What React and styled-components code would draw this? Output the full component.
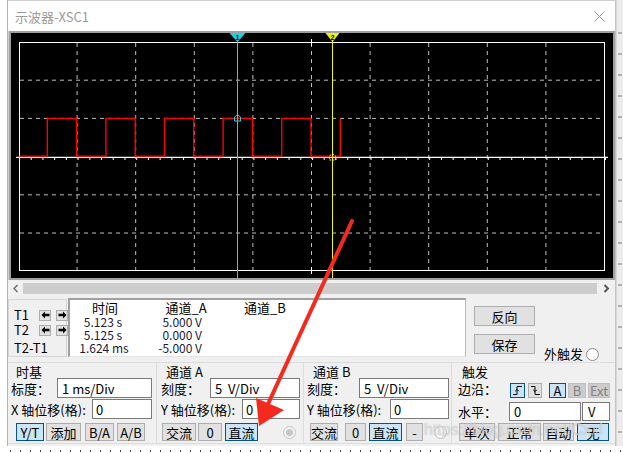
import React from "react";
import styled, { createGlobalStyle } from "styled-components";

const FONT = `"Noto Sans CJK SC", "Noto Sans", sans-serif`;

const GlobalStyle = createGlobalStyle`
  *, *::before, *::after { box-sizing: border-box; }
  html, body { margin: 0; padding: 0; background: #ffffff; }
  body { font-family: ${FONT}; color: #000; }
`;

const Page = styled.div`
  position: relative;
  width: 623px;
  height: 453px;
  overflow: hidden;
  display: flex;
  flex-direction: column;
  background: #fff;
`;

const TopRow = styled.div`
  display: flex;
  height: 446px;
`;

const LeftGap = styled.div`
  width: 7px;
  flex: none;
  background: #fff;
`;

const SideStrip = styled.div`
  flex: 1;
  background-color: #ececec;
  border-left: 1px solid #d8d8d8;
  background-image: repeating-linear-gradient(
    to bottom,
    transparent 0 12px,
    #b0b0b0 12px 14px,
    transparent 14px 21px
  );
  background-size: 4px 100%;
  background-repeat: no-repeat;
  background-position: 1px 20px;
`;

const DotRow = styled.div`
  height: 7px;
  background-color: #fff;
  background-image: repeating-linear-gradient(to right, transparent 0 9px, #444 9px 10px);
  background-size: 100% 2px;
  background-repeat: no-repeat;
  background-position: 1px 4px;
`;

const Window = styled.div`
  width: 609px;
  flex: none;
  display: flex;
  flex-direction: column;
  background: #f0f0f0;
  border-left: 1px solid #b4b4b4;
  border-right: 1px solid #c4c4c4;
`;

const TitleBar = styled.div`
  height: 31px;
  background: #fff;
  border-top: 1px solid #cfcfcf;
  display: flex;
  align-items: center;
  justify-content: space-between;
  padding: 0 10px 0 7px;
  font-size: 13px;
  color: #9a9a9a;
`;

const ScopeFrame = styled.div`
  height: 249px;
  background: #a0a0a0;
  border-left: 1px solid #d0d0d0;
  padding: 2px 2px 2px 2px;
  display: flex;
`;

const Screen = styled.div`
  width: 602px;
  height: 245px;
  background: #000;
  svg { display: block; }
`;

const ScrollBar = styled.div`
  height: 17px;
  display: flex;
  align-items: center;
`;

const ScrollArrow = styled.div`
  width: ${(p) => p.$w}px;
  height: 17px;
  display: flex;
  align-items: center;
  justify-content: center;
`;

const ScrollTrack = styled.div`
  flex: 1;
  height: 11px;
  background: #cdcdcd;
`;

const InfoArea = styled.div`
  height: 61px;
  display: flex;
  align-items: flex-start;
`;

const TPanel = styled.div`
  width: 59px;
  height: 58px;
  margin-top: 2px;
  border: 1px solid #d5d5d5;
  padding: 9px 0 0 5px;
  display: grid;
  grid-template-columns: 20px 12px 12px;
  grid-template-rows: 12px 12px 14px;
  column-gap: 5px;
  row-gap: 3px;
  align-content: start;
  font-size: 13px;
`;

const TLabel = styled.div`
  line-height: 12px;
  font-size: 13px;
  grid-column: ${(p) => p.$span || "auto"};
  margin-top: ${(p) => p.$mt || 0}px;
`;

const MiniBtn = styled.div`
  width: 12px;
  height: 11px;
  align-self: center;
  background: #e1e1e1;
  border: 1px solid #adadad;
  display: flex;
  align-items: center;
  justify-content: center;
`;

const DataTable = styled.div`
  width: 398px;
  height: 59px;
  margin: 1px 0 0 1px;
  background: #fff;
  border-top: 2px solid #a0a0a0;
  border-left: 2px solid #a0a0a0;
  border-right: 1px solid #b8b8b8;
  border-bottom: 1px solid #e4e4e4;
  display: grid;
  grid-template-columns: 70px 82px 86px;
  grid-template-rows: 15px 13px 13px 13px;
  align-content: start;
`;

const HeadCell = styled.div`
  font-size: 13px;
  line-height: 15px;
  text-align: center;
  padding-left: ${(p) => p.$pl || 0}px;
  white-space: nowrap;
`;

const ValCell = styled.div`
  font-size: 12px;
  line-height: 13px;
  color: #1a1a3a;
  white-space: nowrap;
  text-align: ${(p) => p.$align || "center"};
  padding-right: ${(p) => p.$pr || 0}px;
`;

const RightPanel = styled.div`
  flex: 1;
  height: 61px;
  display: flex;
  padding: 9px 0 0 8px;
`;

const BtnColumn = styled.div`
  display: flex;
  flex-direction: column;
  gap: 8px;
`;

const ExtTrig = styled.div`
  align-self: flex-end;
  margin: 0 0 -4px 9px;
  display: flex;
  align-items: center;
  gap: 3px;
  font-size: 13px;
  line-height: 16px;
`;

const Btn = styled.div`
  flex: none;
  width: ${(p) => p.$w}px;
  height: ${(p) => p.$h || 18}px;
  margin-left: ${(p) => p.$ml || 0}px;
  display: flex;
  align-items: center;
  justify-content: center;
  font-size: 13px;
  line-height: 1;
  white-space: pre;
  background: ${(p) => (p.$active ? "#cce4f7" : p.$disabled ? "#cccccc" : "#e1e1e1")};
  border: 1px solid ${(p) => (p.$active ? "#005499" : p.$disabled ? "#bfbfbf" : "#adadad")};
  color: ${(p) => (p.$disabled ? "#838383" : "#000")};
`;

const Radio = styled.div`
  flex: none;
  width: 13px;
  height: 13px;
  border-radius: 50%;
  margin-left: ${(p) => p.$ml || 0}px;
  background: ${(p) => (p.$disabled ? "#f4f4f4" : "#fff")};
  border: 1px solid ${(p) => (p.$disabled ? "#c4c4c4" : "#8c8c8c")};
  display: flex;
  align-items: center;
  justify-content: center;
  &::after {
    content: "";
    width: 7px;
    height: 7px;
    border-radius: 50%;
    background: ${(p) => (p.$dot ? "#c6c6c6" : "transparent")};
  }
`;

const Controls = styled.div`
  display: flex;
  margin-top: 4px;
  height: 82px;
  border-top: 1px solid #dcdcdc;
  border-bottom: 1px solid #dcdcdc;
`;

const Group = styled.div`
  flex: none;
  width: ${(p) => p.$w}px;
  border-right: ${(p) => (p.$last ? "none" : "1px solid #dcdcdc")};
  padding: 0 ${(p) => p.$pr}px 0 ${(p) => p.$pl}px;
  display: flex;
  flex-direction: column;
`;

const GroupTitle = styled.div`
  height: 16px;
  line-height: 16px;
  margin: 1px 0 0 ${(p) => p.$ml}px;
  font-size: 13px;
  white-space: pre;
`;

const Row = styled.div`
  display: flex;
  align-items: center;
  justify-content: space-between;
  height: ${(p) => p.$h}px;
  margin-top: ${(p) => p.$mt}px;
  font-size: 13px;
  white-space: nowrap;
`;

const BtnRow = styled.div`
  display: flex;
  align-items: center;
  height: 18px;
  margin-top: ${(p) => p.$mt ?? 4}px;
  padding-left: ${(p) => p.$pl}px;
`;

const BtnGroup = styled.div`
  display: flex;
  align-self: flex-end;
`;

const Field = styled.div`
  flex: none;
  width: ${(p) => p.$w}px;
  height: ${(p) => p.$h || 20}px;
  margin-left: ${(p) => p.$ml || 0}px;
  background: #fff;
  border: 1px solid #7a7a7a;
  display: flex;
  align-items: center;
  padding-left: ${(p) => p.$pl ?? 4}px;
  font-size: 13px;
  white-space: pre;
`;

const Overlay = styled.svg`
  position: absolute;
  left: 0;
  top: 0;
  pointer-events: none;
`;

const Watermark = styled.div`
  position: absolute;
  left: 424px;
  top: 421px;
  font-family: "Liberation Sans", sans-serif;
  font-size: 16px;
  color: rgba(255, 255, 255, 0.55);
  text-shadow: 0 0 1px rgba(110, 110, 110, 0.55);
  pointer-events: none;
  white-space: nowrap;
`;

/* ---------- drawings ---------- */

const LOW = 156.2;
const HIGH = 118.4;

function tracePoints() {
  const pts = [[19.5, LOW]];
  let level = LOW;
  for (let k = 0; k <= 10; k++) {
    const t = 47.3 + 29.3 * k;
    pts.push([t, level]);
    level = level === LOW ? HIGH : LOW;
    pts.push([t, level]);
  }
  return pts.map((p) => p.join(",")).join(" ");
}

const GRID_X = Array.from({ length: 9 }, (_, i) => 18.5 + 58.6 * (i + 1));
const GRID_Y = [80.2, 118.4, 194.8, 233];
const TICKS = [];
for (let x = 19.5; x <= 606; x += 11.72) TICKS.push(x);

function ScopeGraph() {
  return (
    <svg width="602" height="245" viewBox="11 33 602 245">
      {GRID_X.map((x) => (
        <line key={"gx" + x} x1={x} y1="43" x2={x} y2="271" stroke="#bdbdbd" strokeWidth="1" strokeDasharray="4 4" />
      ))}
      {GRID_Y.map((y) => (
        <line key={"gy" + y} x1="20" y1={y} x2="605" y2={y} stroke="#bdbdbd" strokeWidth="1" strokeDasharray="4 4" />
      ))}
      <rect x="19.5" y="42.5" width="585" height="228" fill="none" stroke="#fff" strokeWidth="1" />
      <line x1="311.5" y1="39" x2="311.5" y2="46" stroke="#fff" strokeWidth="1" />
      <line x1="311.5" y1="267" x2="311.5" y2="274" stroke="#fff" strokeWidth="1" />
      <line x1="16" y1="157.4" x2="608" y2="157.4" stroke="#fff" strokeWidth="1.2" />
      {TICKS.map((x) => (
        <line key={"t" + x} x1={x} y1="157.4" x2={x} y2="160" stroke="#fff" strokeWidth="1" />
      ))}
      <polyline points={tracePoints()} fill="none" stroke="#ff0000" strokeWidth="1.4" />
      {/* cursor 1 */}
      <line x1="237.5" y1="33" x2="237.5" y2="278" stroke="#18d8ea" strokeWidth="1" />
      <polygon points="229.5,33 245.5,33 237.5,42" fill="#16d2e4" />
      <text x="237.5" y="39.5" fontSize="7" fontWeight="bold" textAnchor="middle" fill="#000" fontFamily="Liberation Sans, sans-serif">1</text>
      <polygon points="237.5,114.5 240.5,117 240.5,121 234.5,121 234.5,117" fill="none" stroke="#18d8ea" strokeWidth="1" />
      {/* cursor 2 */}
      <line x1="332.5" y1="33" x2="332.5" y2="278" stroke="#f6f600" strokeWidth="1" />
      <polygon points="325.5,33 339.5,33 332.5,42" fill="#f0f000" />
      <text x="332.5" y="39.5" fontSize="7" fontWeight="bold" textAnchor="middle" fill="#000" fontFamily="Liberation Sans, sans-serif">2</text>
      <polygon points="332.5,153.5 335.5,156 335.5,160 329.5,160 329.5,156" fill="none" stroke="#f6f600" strokeWidth="1" strokeDasharray="2 1" />
    </svg>
  );
}

const CloseIcon = () => (
  <svg width="11" height="11" viewBox="0 0 11 11">
    <path d="M0.5 0.5 L10.5 10.5 M10.5 0.5 L0.5 10.5" stroke="#9a9a9a" strokeWidth="1" />
  </svg>
);

const Chevron = ({ dir, color, bold }) => (
  <svg width="7" height="9" viewBox="0 0 7 9">
    <path
      d={dir === "left" ? "M5.5 1 L2 4.5 L5.5 8" : "M1.5 1 L5 4.5 L1.5 8"}
      fill="none"
      stroke={color}
      strokeWidth={bold ? 2 : 1.4}
    />
  </svg>
);

const ArrowGlyph = ({ dir }) => (
  <svg width="9" height="8" viewBox="0 0 9 8">
    <path
      d={dir === "left" ? "M0.5 4 L4 0.5 V2.8 H8.5 V5.2 H4 V7.5 Z" : "M8.5 4 L5 0.5 V2.8 H0.5 V5.2 H5 V7.5 Z"}
      fill="#000"
    />
  </svg>
);

const EdgeIcon = ({ rising }) => (
  <svg width="11" height="11" viewBox="0 0 11 11">
    <path d={rising ? "M1 9.5 H5 V1.5 H10" : "M1 1.5 H5 V9.5 H10"} fill="none" stroke="#000" strokeWidth="1" />
    <path d={rising ? "M3.2 6.2 L5 4.4 L6.8 6.2" : "M3.2 4.8 L5 6.6 L6.8 4.8"} fill="none" stroke="#000" strokeWidth="1" />
  </svg>
);

export default function App() {
  return (
    <>
      <GlobalStyle />
      <Page>
        <TopRow>
          <LeftGap />
          <Window>
            <TitleBar>
              <span>示波器-XSC1</span>
              <CloseIcon />
            </TitleBar>

            <ScopeFrame>
              <Screen>
                <ScopeGraph />
              </Screen>
            </ScopeFrame>

            <ScrollBar>
              <ScrollArrow $w={15}>
                <Chevron dir="left" color="#6a6a6a" />
              </ScrollArrow>
              <ScrollTrack />
              <ScrollArrow $w={18}>
                <Chevron dir="right" color="#555" bold />
              </ScrollArrow>
            </ScrollBar>

            <InfoArea>
              <TPanel>
                <TLabel>T1</TLabel>
                <MiniBtn><ArrowGlyph dir="left" /></MiniBtn>
                <MiniBtn><ArrowGlyph dir="right" /></MiniBtn>
                <TLabel>T2</TLabel>
                <MiniBtn><ArrowGlyph dir="left" /></MiniBtn>
                <MiniBtn><ArrowGlyph dir="right" /></MiniBtn>
                <TLabel $span="1 / 4" $mt={3}>T2-T1</TLabel>
              </TPanel>

              <DataTable>
                <HeadCell>时间</HeadCell>
                <HeadCell $pl={10}>通道_A</HeadCell>
                <HeadCell>通道_B</HeadCell>

                <ValCell $pr={4}>5.123 s</ValCell>
                <ValCell $align="right" $pr={20}>5.000 V</ValCell>
                <ValCell />

                <ValCell $pr={4}>5.125 s</ValCell>
                <ValCell $align="right" $pr={20}>0.000 V</ValCell>
                <ValCell />

                <ValCell $pr={2}>1.624 ms</ValCell>
                <ValCell $align="right" $pr={20}>-5.000 V</ValCell>
                <ValCell />
              </DataTable>

              <RightPanel>
                <BtnColumn>
                  <Btn $w={61} $h={20}>反向</Btn>
                  <Btn $w={61} $h={20}>保存</Btn>
                </BtnColumn>
                <ExtTrig>
                  <span>外触发</span>
                  <Radio />
                </ExtTrig>
              </RightPanel>
            </InfoArea>

            <Controls>
              <Group $w={149} $pl={3} $pr={4}>
                <GroupTitle $ml={5}>时基</GroupTitle>
                <Row $h={20} $mt={-2}>
                  <span>标度：</span>
                  <Field $w={95}>1 ms/Div</Field>
                </Row>
                <Row $h={20} $mt={1}>
                  <span>X 轴位移(格):</span>
                  <Field $w={60} $pl={3}>0</Field>
                </Row>
                <BtnRow $pl={5}>
                  <Btn $w={28} $active>Y/T</Btn>
                  <Btn $w={35} $ml={2}>添加</Btn>
                  <Btn $w={29} $ml={4}>B/A</Btn>
                  <Btn $w={28} $ml={3}>A/B</Btn>
                </BtnRow>
              </Group>

              <Group $w={147} $pl={4} $pr={3}>
                <GroupTitle $ml={5}>通道 A</GroupTitle>
                <Row $h={20} $mt={-2}>
                  <span>刻度：</span>
                  <Field $w={90}>5  V/Div</Field>
                </Row>
                <Row $h={20} $mt={1}>
                  <span>Y 轴位移(格):</span>
                  <Field $w={58} $pl={3}>0</Field>
                </Row>
                <BtnRow $pl={1}>
                  <Btn $w={34}>交流</Btn>
                  <Btn $w={24} $ml={2}>0</Btn>
                  <Btn $w={33} $ml={3} $active>直流</Btn>
                  <Radio $ml={25} $disabled $dot />
                </BtnRow>
              </Group>

              <Group $w={148} $pl={3} $pr={2}>
                <GroupTitle $ml={6}>通道 B</GroupTitle>
                <Row $h={20} $mt={-2}>
                  <span>刻度：</span>
                  <Field $w={90}>5  V/Div</Field>
                </Row>
                <Row $h={20} $mt={1}>
                  <span>Y 轴位移(格):</span>
                  <Field $w={59} $pl={3}>0</Field>
                </Row>
                <BtnRow $pl={3}>
                  <Btn $w={28}>交流</Btn>
                  <Btn $w={21} $ml={7}>0</Btn>
                  <Btn $w={33} $ml={3} $active>直流</Btn>
                  <Btn $w={17} $ml={4}>-</Btn>
                  <Radio $ml={11} $disabled />
                </BtnRow>
              </Group>

              <Group $w={163} $pl={6} $pr={5} $last>
                <GroupTitle $ml={4}>触发</GroupTitle>
                <Row $h={20} $mt={-2}>
                  <span>边沿：</span>
                  <BtnGroup>
                    <Btn $w={15} $h={15} $active><EdgeIcon rising /></Btn>
                    <Btn $w={14} $h={15} $ml={3}><EdgeIcon /></Btn>
                    <Btn $w={17} $h={15} $ml={7} $active>A</Btn>
                    <Btn $w={18} $h={15} $ml={2} $disabled>B</Btn>
                    <Btn $w={22} $h={15} $ml={2} $disabled>Ext</Btn>
                  </BtnGroup>
                </Row>
                <Row $h={19} $mt={4}>
                  <span>水平：</span>
                  <BtnGroup>
                    <Field $w={72} $h={19}>0</Field>
                    <Field $w={28} $h={19} $ml={1} $pl={5}>V</Field>
                  </BtnGroup>
                </Row>
                <BtnRow $pl={1} $mt={2}>
                  <Btn $w={36}>单次</Btn>
                  <Btn $w={43} $ml={3}>正常</Btn>
                  <Btn $w={31} $ml={2}>自动</Btn>
                  <Btn $w={32} $ml={3} $active>无</Btn>
                </BtnRow>
              </Group>
            </Controls>
          </Window>
          <SideStrip />
        </TopRow>
        <DotRow />

        <Watermark>https://blog.csdn.net/Cxxl</Watermark>
        <Overlay width="623" height="453" viewBox="0 0 623 453">
          <line x1="352" y1="221" x2="268" y2="404" stroke="#f52a1f" strokeWidth="4" strokeLinecap="round" />
          <polygon points="259,426 256,398 284,410" fill="#f52a1f" />
        </Overlay>
      </Page>
    </>
  );
}
